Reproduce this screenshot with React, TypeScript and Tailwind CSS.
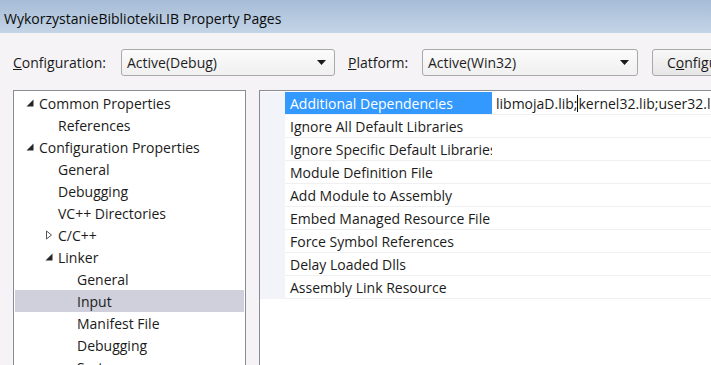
import { useState } from "react";

interface TreeNode {
  label: string;
  level: number;
  arrow?: "open" | "closed";
  selected?: boolean;
}

const tree: TreeNode[] = [
  { label: "Common Properties", level: 0, arrow: "open" },
  { label: "References", level: 1 },
  { label: "Configuration Properties", level: 0, arrow: "open" },
  { label: "General", level: 1 },
  { label: "Debugging", level: 1 },
  { label: "VC++ Directories", level: 1 },
  { label: "C/C++", level: 1, arrow: "closed" },
  { label: "Linker", level: 1, arrow: "open" },
  { label: "General", level: 2 },
  { label: "Input", level: 2, selected: true },
  { label: "Manifest File", level: 2 },
  { label: "Debugging", level: 2 },
  { label: "System", level: 2 },
];

const props = [
  "Additional Dependencies",
  "Ignore All Default Libraries",
  "Ignore Specific Default Libraries",
  "Module Definition File",
  "Add Module to Assembly",
  "Embed Managed Resource File",
  "Force Symbol References",
  "Delay Loaded Dlls",
  "Assembly Link Resource",
];

const font = "font-['Open_Sans','Noto_Sans',sans-serif]";

const Combo = ({ value, width }: { value: string; width: string }) => (
  <div
    className={`${width} h-[27px] flex items-center justify-between pl-[5px] pr-[8px] border border-[#a9a9a9] rounded-[3px] bg-gradient-to-b from-[#fbfbfb] to-[#f0f0f0] text-[#1e1e1e] shrink-0`}
  >
    <span>{value}</span>
    <svg width="9" height="5" viewBox="0 0 9 5">
      <path d="M0 0H9L4.5 5Z" fill="#1a1a1a" />
    </svg>
  </div>
);

const Arrow = ({ kind }: { kind: "open" | "closed" }) =>
  kind === "open" ? (
    <svg width="8" height="8" viewBox="0 0 8 8">
      <path d="M7.5 0.5V7.5H0.5Z" fill="#262626" />
    </svg>
  ) : (
    <svg width="8" height="10" viewBox="0 0 8 10">
      <path d="M1.5 1V9L6.5 5Z" fill="none" stroke="#555" strokeWidth="1" />
    </svg>
  );

export default function App() {
  const [active] = useState(0);

  return (
    <div className={`w-[711px] h-[365px] overflow-hidden bg-[#f5f3f5] text-[14px] text-[#1b1b1b] ${font}`}>
      <div className="h-[33px] flex items-center pl-[4px] pt-[3px] bg-gradient-to-b from-[#a6bdd7] to-[#c3d4e6] text-[14px] text-[#0a0a0a]">
        WykorzystanieBibliotekiLIB Property Pages
      </div>

      <div className="flex items-center h-[27px] mt-[16px] pl-[13px] whitespace-nowrap">
        <span className="w-[108px] shrink-0">
          <span className="underline">C</span>onfiguration:
        </span>
        <Combo value="Active(Debug)" width="w-[214px]" />
        <span className="ml-[13px] w-[74px] shrink-0">
          <span className="underline">P</span>latform:
        </span>
        <Combo value="Active(Win32)" width="w-[216px]" />
        <div className="ml-[14px] h-[27px] w-[110px] shrink-0 flex items-center pl-[14px] border border-[#a9a9a9] rounded-[3px] bg-gradient-to-b from-[#f8f8f8] to-[#e6e6e6]">
          C<span className="underline">o</span>nfiguration Manager...
        </div>
      </div>

      <div className="flex gap-[13px] pl-[13px] mt-[14px] h-[400px]">
        <div className="w-[233px] shrink-0 border border-[#8a8c93] bg-white pt-[1px] px-[1px]">
          {tree.map((n, i) => (
            <div
              key={i}
              className={`h-[22px] flex items-center whitespace-nowrap ${n.selected ? "bg-[#cfd0dc]" : ""}`}
              style={{ paddingLeft: 11 + n.level * 19 }}
            >
              <span className="w-[13px] flex items-center shrink-0">
                {n.arrow && <Arrow kind={n.arrow} />}
              </span>
              <span>{n.label}</span>
            </div>
          ))}
        </div>

        <div className="flex-1 border-l border-t border-[#8a8c93] bg-white pt-[1px]">
          {props.map((p, i) => (
            <div key={p} className="h-[23px] flex whitespace-nowrap">
              <div className="w-[25px] shrink-0 bg-[#f3f3fa]" />
              <div
                className={`w-[207px] shrink-0 overflow-hidden pl-[5px] flex items-center border-b border-[#f0f0f0] ${
                  i === active ? "bg-[#3399ff] text-white" : ""
                }`}
              >
                {p}
              </div>
              <div className="flex-1 pl-[4px] flex items-center border-b border-[#f0f0f0]">
                {i === 0 && (
                  <>
                    libmojaD.lib;
                    <span className="w-px h-[17px] bg-black" />
                    kernel32.lib;user32.lib;gdi32.lib
                  </>
                )}
              </div>
            </div>
          ))}
        </div>
      </div>
    </div>
  );
}
